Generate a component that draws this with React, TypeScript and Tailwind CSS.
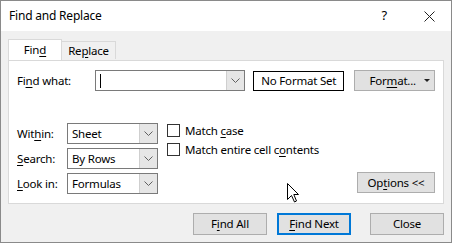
import React from 'react';

const font = "font-['Segoe_UI','Noto_Sans','Open_Sans',sans-serif]";

function U({ children }: { children: React.ReactNode }) {
  return <span className="underline underline-offset-[2px]">{children}</span>;
}

function Chevron() {
  return (
    <svg width="9" height="5" viewBox="0 0 9 5" fill="none">
      <path d="M0.5 0.5 L4.5 4.5 L8.5 0.5" stroke="#606060" strokeWidth="1" />
    </svg>
  );
}

function Combo({ width, value, caret }: { width: string; value: string; caret?: boolean }) {
  return (
    <div className={`flex h-[21px] ${width} border border-[#7a7a7a] bg-white`}>
      <div className="flex flex-1 items-center pl-[4px]">
        {caret && <div className="h-[14px] w-px bg-black" />}
        {value}
      </div>
      <div className="flex w-[18px] items-center justify-center border-l border-[#cfcfcf] bg-[#e6e6e6]">
        <Chevron />
      </div>
    </div>
  );
}

function Button({ children, className = '' }: { children: React.ReactNode; className?: string }) {
  return (
    <div className={`flex h-[21px] items-center justify-center border border-[#adadad] bg-[#e1e1e1] ${className}`}>
      {children}
    </div>
  );
}

function Check({ children }: { children: React.ReactNode }) {
  return (
    <div className="flex items-center gap-[5px]">
      <div className="h-[13px] w-[13px] border border-[#333] bg-white" />
      <span>{children}</span>
    </div>
  );
}

export default function App() {
  return (
    <div className={`relative flex h-[243px] w-[452px] flex-col border border-[#8a8a8a] bg-[#f0f0f0] text-[11.5px] tracking-[-0.2px] text-black ${font}`}>
      {/* title bar */}
      <div className="flex h-[30px] items-center bg-white pl-[8px]">
        <span className="flex-1 text-[12px]">Find and Replace</span>
        <span className="mr-[37px] text-[13px]">?</span>
        <svg width="11" height="11" viewBox="0 0 11 11" className="mr-[16px]">
          <path d="M0.5 0.5 L10.5 10.5 M10.5 0.5 L0.5 10.5" stroke="#222" strokeWidth="1" />
        </svg>
      </div>

      <div className="flex flex-col px-[7px] pt-[9px]">
        {/* tabs */}
        <div className="relative z-10 flex h-[20px] items-end">
          <div className="flex h-[21px] w-[54px] items-center justify-center border border-b-0 border-[#d9d9d9] bg-white pb-[1px]">
            Fin<U>d</U>
          </div>
          <div className="mb-[1px] flex h-[18px] w-[54px] items-center justify-center border border-l-0 border-b-0 border-[#d9d9d9] bg-[#f0f0f0]">
            Re<U>p</U>lace
          </div>
        </div>

        {/* panel */}
        <div className="flex h-[144px] flex-col border border-[#d9d9d9] bg-white pl-[8px] pr-[8px] pt-[9px]">
          <div className="flex items-center">
            <span className="w-[78px]">Fi<U>n</U>d what:</span>
            <Combo width="w-[151px]" value="" caret />
            <div className="ml-[8px] flex h-[20px] w-[91px] items-center justify-center border border-black">
              No Format Set
            </div>
            <Button className="ml-[10px] h-[20px] w-[81px] justify-end pr-[4px]">
              <span className="mr-[8px]">For<U>m</U>at...</span>
              <svg width="6" height="3" viewBox="0 0 6 3">
                <path d="M0 0 H6 L3 3 Z" fill="#222" />
              </svg>
            </Button>
          </div>

          <div className="mt-[32px] flex">
            <div className="flex flex-col gap-[4px]">
              <div className="flex items-center">
                <span className="w-[50px]">Wit<U>h</U>in:</span>
                <Combo width="w-[91px]" value="Sheet" />
              </div>
              <div className="flex items-center">
                <span className="w-[50px]"><U>S</U>earch:</span>
                <Combo width="w-[91px]" value="By Rows" />
              </div>
              <div className="flex items-center">
                <span className="w-[50px]"><U>L</U>ook in:</span>
                <Combo width="w-[91px]" value="Formulas" />
              </div>
            </div>
            <div className="ml-[9px] mt-[-1px] flex flex-col gap-[2px]">
              <Check>Match <U>c</U>ase</Check>
              <Check>Match entire cell c<U>o</U>ntents</Check>
            </div>
            <div className="flex flex-1 items-end justify-end pb-[1px]">
              <Button className="w-[78px]">Op<U>t</U>ions &lt;&lt;</Button>
            </div>
          </div>
        </div>

        {/* bottom buttons */}
        <div className="mt-[9px] flex justify-end">
          <Button className="h-[22px] w-[74px]">F<U>i</U>nd All</Button>
          <div className="ml-[10px] flex h-[22px] w-[74px] items-center justify-center border-2 border-[#0078d7] bg-[#e1e1e1]">
            <U>F</U>ind Next
          </div>
          <Button className="ml-[19px] h-[22px] w-[74px]">Close</Button>
        </div>
      </div>

      {/* mouse pointer */}
      <svg width="12" height="20" viewBox="0 0 12 20" className="absolute left-[286px] top-[182px]">
        <path d="M0.5 0.5 L0.5 16.5 L4.5 12.5 L7.5 19 L9.5 18 L6.8 11.5 L11.5 11.5 Z" fill="white" stroke="black" strokeWidth="1" />
      </svg>
    </div>
  );
}
